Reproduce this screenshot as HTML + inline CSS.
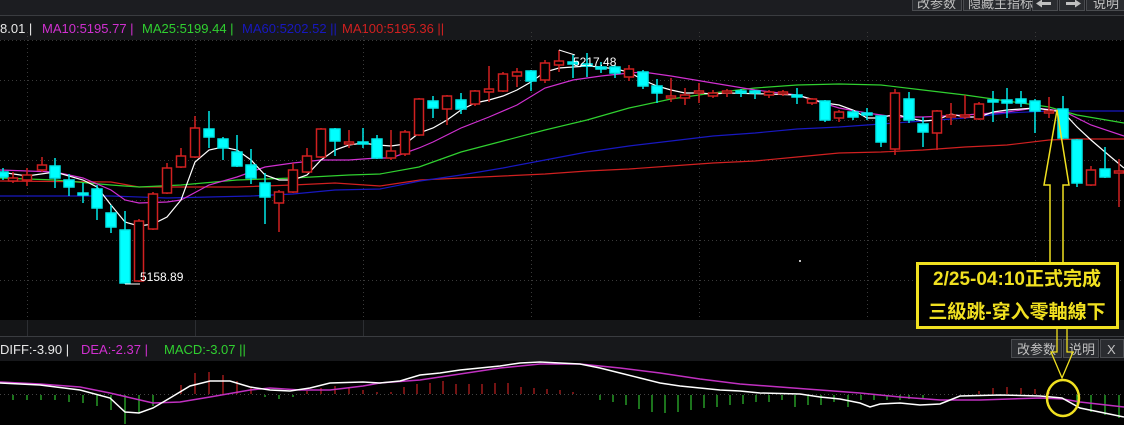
<!DOCTYPE html>
<html><head><meta charset="utf-8"><style>
body{margin:0;width:1124px;height:425px;overflow:hidden;background:#000;font-family:"Liberation Sans","Noto Sans CJK SC",sans-serif}
svg{display:block}
</style></head><body>
<svg width="1124" height="425" viewBox="0 0 1124 425" xmlns="http://www.w3.org/2000/svg" font-family="Liberation Sans, Noto Sans CJK SC, sans-serif">
<rect width="1124" height="425" fill="#000"/>
<rect x="0" y="0" width="1124" height="15" fill="#1c1d21"/>
<line x1="0" y1="15.5" x2="1124" y2="15.5" stroke="#3a3c40"/>
<g fill="#2a2c30" stroke="#4a4c50">
<rect x="912.5" y="-3.5" width="49" height="14"/>
<rect x="963.5" y="-3.5" width="67" height="14"/>
<rect x="1032.5" y="-3.5" width="25" height="14"/>
<rect x="1059.5" y="-3.5" width="25" height="14"/>
<rect x="1086.5" y="-3.5" width="38" height="14"/>
</g>
<g fill="#c0c0c0" font-size="13">
<text x="917" y="8">改参数</text>
<text x="968" y="8">隐藏主指标</text>
<text x="1093" y="8">说明</text>
</g>
<rect x="1040" y="2" width="11" height="3" fill="#c0c0c0"/><path d="M1036 3.5l6-4v8z" fill="#c0c0c0"/>
<rect x="1066" y="2" width="11" height="3" fill="#c0c0c0"/><path d="M1081 3.5l-6-4v8z" fill="#c0c0c0"/>
<rect x="0" y="16" width="1124" height="24" fill="#17181b"/>
<g font-size="13">
<text x="0" y="33" fill="#e8e8e8">8.01 |</text>
<text x="42" y="33" fill="#d030d0">MA10:5195.77 |</text>
<text x="142" y="33" fill="#30d030">MA25:5199.44 |</text>
<text x="242" y="33" fill="#1818c0">MA60:5202.52 ||</text>
<text x="342" y="33" fill="#d02020">MA100:5195.36 ||</text>
</g>
<g stroke="#3a3a3a" stroke-dasharray="1 3">
<line x1="0" y1="40.5" x2="1124" y2="40.5"/>
<line x1="0" y1="80.5" x2="1124" y2="80.5"/>
<line x1="0" y1="120.5" x2="1124" y2="120.5"/>
<line x1="0" y1="160.5" x2="1124" y2="160.5"/>
<line x1="0" y1="200.5" x2="1124" y2="200.5"/>
<line x1="0" y1="240.5" x2="1124" y2="240.5"/>
<line x1="0" y1="280.5" x2="1124" y2="280.5"/>
<line x1="27.5" y1="32" x2="27.5" y2="320"/>
<line x1="195.5" y1="32" x2="195.5" y2="320"/>
<line x1="363.5" y1="32" x2="363.5" y2="320"/>
<line x1="531.5" y1="32" x2="531.5" y2="320"/>
<line x1="699.5" y1="32" x2="699.5" y2="320"/>
<line x1="867.5" y1="32" x2="867.5" y2="320"/>
<line x1="1035.5" y1="32" x2="1035.5" y2="320"/>
</g>
<g fill="none" stroke-width="1.2">
<polyline stroke="#d02020" points="0,181 111,182 139,187 181,187 237,187 293,185 335,183 380,186 420,180 461,178 503,176 545,174 587,171 629,169 671,166 713,163 755,161 797,157 839,153 881,152 923,150 965,147 1007,145 1049,140 1077,139 1124,139"/>
<polyline stroke="#1818c0" points="0,196 111,196 167,198 209,197 251,196 293,194 335,190 380,189 420,181 461,175 503,168 545,160 587,152 629,146 671,141 713,136 755,133 797,129 839,127 881,124 923,121 965,118 1007,113 1049,111 1124,111"/>
<polyline stroke="#30d030" points="0,178 55,180 111,185 139,187 181,185 237,180 293,178 349,175 380,174 419,167 461,152 503,141 545,130 587,120 629,108 671,99 713,93 755,88 797,85 839,84 881,85 923,90 965,95 1007,101 1049,107 1077,115 1124,123"/>
<polyline stroke="#d030d0" points="0,170 55,172 83,178 111,190 125,200 139,203 167,202 181,200 209,185 237,177 251,172 265,167 293,163 321,160 349,160 377,158 391,158 419,148 433,142 461,128 489,117 517,105 545,88 573,80 601,76 629,73 643,72 671,76 713,83 755,90 797,95 839,108 867,113 895,117 923,117 965,115 1007,112 1035,108 1063,111 1091,125 1124,136"/>
<polyline stroke="#fff" points="0,172 27,176 55,172 83,180 97,187 111,205 125,222 139,226 153,224 167,217 181,200 195,162 209,150 223,147 237,150 251,160 265,175 279,180 293,180 307,175 321,160 335,150 349,145 363,143 377,145 391,146 405,144 419,133 433,128 447,120 461,110 475,103 489,100 503,96 517,90 531,82 545,72 559,68 573,67 587,66 601,67 615,69 629,72 643,80 657,86 671,90 685,93 699,93 713,94 727,93 769,94 797,95 825,103 839,105 853,110 867,118 881,118 895,114 909,118 923,121 937,120 951,114 965,117 979,117 993,112 1007,110 1021,109 1035,108 1049,110 1063,112 1077,127 1091,140 1105,152 1124,168"/>
</g>
<g stroke-width="1.5">
<g stroke="#00e8e8" fill="#00ffff">
<line x1="3" y1="168" x2="3" y2="180"/><rect x="-2" y="172" width="10" height="5"/>
<line x1="55" y1="158" x2="55" y2="188"/><rect x="50" y="166" width="10" height="12"/>
<line x1="69" y1="174" x2="69" y2="196"/><rect x="64" y="180" width="10" height="7"/>
<line x1="83" y1="183" x2="83" y2="203"/><rect x="78" y="193" width="10" height="2"/>
<line x1="97" y1="185" x2="97" y2="220"/><rect x="92" y="189" width="10" height="19"/>
<line x1="111" y1="205" x2="111" y2="233"/><rect x="106" y="213" width="10" height="14"/>
<line x1="125" y1="211" x2="125" y2="284"/><rect x="120" y="230" width="10" height="53"/>
<line x1="209" y1="111" x2="209" y2="148"/><rect x="204" y="129" width="10" height="8"/>
<line x1="223" y1="137" x2="223" y2="160"/><rect x="218" y="139" width="10" height="9"/>
<line x1="237" y1="135" x2="237" y2="167"/><rect x="232" y="152" width="10" height="14"/>
<line x1="251" y1="149" x2="251" y2="184"/><rect x="246" y="165" width="10" height="13"/>
<line x1="265" y1="173" x2="265" y2="224"/><rect x="260" y="183" width="10" height="14"/>
<line x1="335" y1="128" x2="335" y2="156"/><rect x="330" y="129" width="10" height="12"/>
<line x1="363" y1="128" x2="363" y2="148"/><rect x="358" y="142" width="10" height="2"/>
<line x1="377" y1="135" x2="377" y2="159"/><rect x="372" y="139" width="10" height="19"/>
<line x1="433" y1="96" x2="433" y2="118"/><rect x="428" y="101" width="10" height="7"/>
<line x1="461" y1="93" x2="461" y2="114"/><rect x="456" y="100" width="10" height="9"/>
<line x1="531" y1="70" x2="531" y2="91"/><rect x="526" y="71" width="10" height="10"/>
<line x1="573" y1="55" x2="573" y2="78"/><rect x="568" y="62" width="10" height="2"/>
<line x1="587" y1="53" x2="587" y2="77"/><rect x="582" y="64" width="10" height="2"/>
<line x1="601" y1="62" x2="601" y2="73"/><rect x="596" y="67" width="10" height="2"/>
<line x1="615" y1="65" x2="615" y2="78"/><rect x="610" y="67" width="10" height="6"/>
<line x1="643" y1="70" x2="643" y2="89"/><rect x="638" y="72" width="10" height="14"/>
<line x1="657" y1="79" x2="657" y2="103"/><rect x="652" y="86" width="10" height="7"/>
<line x1="741" y1="89" x2="741" y2="97"/><rect x="736" y="91" width="10" height="2"/>
<line x1="755" y1="90" x2="755" y2="99"/><rect x="750" y="91" width="10" height="2"/>
<line x1="797" y1="88" x2="797" y2="104"/><rect x="792" y="95" width="10" height="2"/>
<line x1="825" y1="100" x2="825" y2="122"/><rect x="820" y="101" width="10" height="19"/>
<line x1="853" y1="110" x2="853" y2="120"/><rect x="848" y="112" width="10" height="5"/>
<line x1="867" y1="108" x2="867" y2="120"/><rect x="862" y="113" width="10" height="2"/>
<line x1="881" y1="115" x2="881" y2="147"/><rect x="876" y="116" width="10" height="26"/>
<line x1="909" y1="92" x2="909" y2="123"/><rect x="904" y="99" width="10" height="21"/>
<line x1="923" y1="117" x2="923" y2="147"/><rect x="918" y="124" width="10" height="8"/>
<line x1="993" y1="91" x2="993" y2="122"/><rect x="988" y="100" width="10" height="2"/>
<line x1="1007" y1="88" x2="1007" y2="118"/><rect x="1002" y="100" width="10" height="3"/>
<line x1="1021" y1="91" x2="1021" y2="107"/><rect x="1016" y="99" width="10" height="4"/>
<line x1="1035" y1="99" x2="1035" y2="133"/><rect x="1030" y="101" width="10" height="10"/>
<line x1="1063" y1="96" x2="1063" y2="139"/><rect x="1058" y="109" width="10" height="29"/>
<line x1="1077" y1="139" x2="1077" y2="187"/><rect x="1072" y="140" width="10" height="43"/>
<line x1="1105" y1="147" x2="1105" y2="178"/><rect x="1100" y="169" width="10" height="8"/>
</g>
<g stroke="#d02020" fill="#000">
<line x1="13" y1="172" x2="13" y2="183"/><rect x="8.5" y="178" width="9" height="3"/>
<line x1="27" y1="168" x2="27" y2="186"/><rect x="22.5" y="175" width="9" height="5"/>
<line x1="42" y1="157" x2="42" y2="172"/><rect x="37.5" y="165" width="9" height="5"/>
<line x1="139" y1="219" x2="139" y2="282"/><rect x="134.5" y="221" width="9" height="60"/>
<line x1="153" y1="192" x2="153" y2="230"/><rect x="148.5" y="194" width="9" height="35"/>
<line x1="167" y1="163" x2="167" y2="194"/><rect x="162.5" y="168" width="9" height="25"/>
<line x1="181" y1="148" x2="181" y2="168"/><rect x="176.5" y="156" width="9" height="11"/>
<line x1="195" y1="116" x2="195" y2="158"/><rect x="190.5" y="128" width="9" height="29"/>
<line x1="279" y1="190" x2="279" y2="232"/><rect x="274.5" y="192" width="9" height="11"/>
<line x1="293" y1="163" x2="293" y2="193"/><rect x="288.5" y="170" width="9" height="22"/>
<line x1="307" y1="148" x2="307" y2="173"/><rect x="302.5" y="156" width="9" height="16"/>
<line x1="321" y1="128" x2="321" y2="158"/><rect x="316.5" y="129" width="9" height="28"/>
<line x1="349" y1="130" x2="349" y2="148"/><rect x="344.5" y="142" width="9" height="2"/>
<line x1="391" y1="130" x2="391" y2="160"/><rect x="386.5" y="151" width="9" height="7"/>
<line x1="405" y1="130" x2="405" y2="156"/><rect x="400.5" y="132" width="9" height="22"/>
<line x1="419" y1="98" x2="419" y2="136"/><rect x="414.5" y="99" width="9" height="36"/>
<line x1="447" y1="95" x2="447" y2="125"/><rect x="442.5" y="96" width="9" height="13"/>
<line x1="475" y1="90" x2="475" y2="106"/><rect x="470.5" y="91" width="9" height="13"/>
<line x1="489" y1="66" x2="489" y2="102"/><rect x="484.5" y="89" width="9" height="3"/>
<line x1="503" y1="72" x2="503" y2="92"/><rect x="498.5" y="74" width="9" height="17"/>
<line x1="517" y1="68" x2="517" y2="87"/><rect x="512.5" y="72" width="9" height="4"/>
<line x1="545" y1="60" x2="545" y2="83"/><rect x="540.5" y="63" width="9" height="17"/>
<line x1="559" y1="50" x2="559" y2="72"/><rect x="554.5" y="61" width="9" height="4"/>
<line x1="629" y1="65" x2="629" y2="81"/><rect x="624.5" y="69" width="9" height="8"/>
<line x1="671" y1="78" x2="671" y2="102"/><rect x="666.5" y="96" width="9" height="2"/>
<line x1="685" y1="88" x2="685" y2="105"/><rect x="680.5" y="95" width="9" height="3"/>
<line x1="699" y1="83" x2="699" y2="103"/><rect x="694.5" y="91" width="9" height="2"/>
<line x1="713" y1="90" x2="713" y2="98"/><rect x="708.5" y="93" width="9" height="3"/>
<line x1="727" y1="89" x2="727" y2="97"/><rect x="722.5" y="91" width="9" height="2"/>
<line x1="769" y1="90" x2="769" y2="98"/><rect x="764.5" y="92" width="9" height="3"/>
<line x1="783" y1="90" x2="783" y2="96"/><rect x="778.5" y="92" width="9" height="2"/>
<line x1="812" y1="98" x2="812" y2="105"/><rect x="807.5" y="99" width="9" height="4"/>
<line x1="839" y1="110" x2="839" y2="122"/><rect x="834.5" y="112" width="9" height="6"/>
<line x1="895" y1="89" x2="895" y2="155"/><rect x="890.5" y="93" width="9" height="56"/>
<line x1="937" y1="110" x2="937" y2="150"/><rect x="932.5" y="111" width="9" height="22"/>
<line x1="951" y1="103" x2="951" y2="125"/><rect x="946.5" y="115" width="9" height="2"/>
<line x1="965" y1="95" x2="965" y2="119"/><rect x="960.5" y="115" width="9" height="2"/>
<line x1="979" y1="102" x2="979" y2="120"/><rect x="974.5" y="104" width="9" height="15"/>
<line x1="1049" y1="97" x2="1049" y2="118"/><rect x="1044.5" y="111" width="9" height="2"/>
<line x1="1091" y1="166" x2="1091" y2="186"/><rect x="1086.5" y="170" width="9" height="15"/>
<line x1="1119" y1="159" x2="1119" y2="207"/><rect x="1114.5" y="171" width="9" height="2"/>
</g>
</g>
<polyline points="125,284 140,284" stroke="#fff" fill="none"/>
<text x="140" y="281" fill="#fff" font-size="12">5158.89</text>
<polyline points="559,50 575,55" stroke="#fff" fill="none"/>
<text x="573" y="66" fill="#fff" font-size="12">5217.48</text>
<circle cx="800" cy="261" r="1" fill="#fff"/>
<path d="M1057 110 L1044 185 L1050 185 L1050 262 M1057 110 L1069 185 L1063 185 L1063 262" stroke="#f0e020" stroke-width="1.5" fill="none"/>
<rect x="0" y="320" width="1124" height="17" fill="#141517"/>
<line x1="0" y1="336.5" x2="1124" y2="336.5" stroke="#3a3c40"/>
<g stroke="#2c2e32"><line x1="27.5" y1="320" x2="27.5" y2="336"/><line x1="195.5" y1="320" x2="195.5" y2="336"/><line x1="363.5" y1="320" x2="363.5" y2="336"/></g>
<rect x="0" y="337" width="1124" height="24" fill="#17181b"/>
<g font-size="13">
<text x="0" y="354" fill="#e8e8e8">DIFF:-3.90 |</text>
<text x="81" y="354" fill="#d030d0">DEA:-2.37 |</text>
<text x="164" y="354" fill="#30d030">MACD:-3.07 ||</text>
</g>
<g fill="#2a2c30" stroke="#4a4c50">
<rect x="1011.5" y="339.5" width="50" height="18"/>
<rect x="1063.5" y="339.5" width="35" height="18"/>
<rect x="1100.5" y="339.5" width="23" height="18"/>
</g>
<g fill="#c0c0c0" font-size="13"><text x="1017" y="354">改参数</text><text x="1069" y="354">说明</text><text x="1107" y="354">X</text></g>
<line x1="0" y1="394.5" x2="1124" y2="394.5" stroke="#444" stroke-dasharray="1 3"/>
<g stroke="#30c030" stroke-width="1.2">
<line x1="13" y1="395" x2="13" y2="400"/><line x1="27" y1="395" x2="27" y2="400"/><line x1="41" y1="395" x2="41" y2="400"/><line x1="55" y1="395" x2="55" y2="400"/><line x1="69" y1="395" x2="69" y2="402"/><line x1="83" y1="395" x2="83" y2="403"/><line x1="97" y1="395" x2="97" y2="406"/><line x1="111" y1="395" x2="111" y2="410"/><line x1="125" y1="395" x2="125" y2="424"/><line x1="139" y1="395" x2="139" y2="413"/><line x1="153" y1="395" x2="153" y2="406"/>
<line x1="265" y1="395" x2="265" y2="397"/><line x1="279" y1="395" x2="279" y2="399"/><line x1="293" y1="395" x2="293" y2="397"/>
<line x1="600" y1="395" x2="600" y2="400"/><line x1="613" y1="395" x2="613" y2="402"/><line x1="626" y1="395" x2="626" y2="405"/><line x1="639" y1="395" x2="639" y2="409"/><line x1="652" y1="395" x2="652" y2="412"/><line x1="665" y1="395" x2="665" y2="413"/><line x1="678" y1="395" x2="678" y2="412"/><line x1="691" y1="395" x2="691" y2="410"/><line x1="704" y1="395" x2="704" y2="408"/><line x1="717" y1="395" x2="717" y2="407"/><line x1="730" y1="395" x2="730" y2="405"/><line x1="743" y1="395" x2="743" y2="404"/><line x1="756" y1="395" x2="756" y2="402"/><line x1="769" y1="395" x2="769" y2="402"/><line x1="782" y1="395" x2="782" y2="400"/><line x1="795" y1="395" x2="795" y2="407"/><line x1="808" y1="395" x2="808" y2="405"/><line x1="821" y1="395" x2="821" y2="405"/><line x1="834" y1="395" x2="834" y2="402"/><line x1="848" y1="395" x2="848" y2="407"/><line x1="861" y1="395" x2="861" y2="400"/><line x1="874" y1="395" x2="874" y2="400"/><line x1="887" y1="395" x2="887" y2="400"/><line x1="900" y1="395" x2="900" y2="400"/><line x1="909" y1="395" x2="909" y2="399"/><line x1="923" y1="395" x2="923" y2="399"/>
<line x1="1077" y1="395" x2="1077" y2="405"/><line x1="1091" y1="395" x2="1091" y2="412"/><line x1="1105" y1="395" x2="1105" y2="415"/><line x1="1119" y1="395" x2="1119" y2="418"/>
</g>
<g stroke="#c02020" stroke-width="1.2">
<line x1="181" y1="394" x2="181" y2="385"/><line x1="195" y1="394" x2="195" y2="373"/><line x1="209" y1="394" x2="209" y2="372"/><line x1="223" y1="394" x2="223" y2="375"/><line x1="237" y1="394" x2="237" y2="381"/><line x1="251" y1="394" x2="251" y2="388"/>
<line x1="307" y1="394" x2="307" y2="391"/><line x1="321" y1="394" x2="321" y2="388"/><line x1="335" y1="394" x2="335" y2="386"/><line x1="349" y1="394" x2="349" y2="387"/><line x1="363" y1="394" x2="363" y2="390"/><line x1="377" y1="394" x2="377" y2="392"/>
<line x1="391" y1="394" x2="391" y2="392"/><line x1="404" y1="394" x2="404" y2="387"/><line x1="417" y1="394" x2="417" y2="384"/><line x1="430" y1="394" x2="430" y2="383"/><line x1="443" y1="394" x2="443" y2="381"/><line x1="456" y1="394" x2="456" y2="384"/><line x1="469" y1="394" x2="469" y2="384"/><line x1="482" y1="394" x2="482" y2="384"/><line x1="495" y1="394" x2="495" y2="383"/><line x1="508" y1="394" x2="508" y2="383"/><line x1="521" y1="394" x2="521" y2="387"/><line x1="534" y1="394" x2="534" y2="388"/><line x1="547" y1="394" x2="547" y2="389"/><line x1="560" y1="394" x2="560" y2="390"/><line x1="573" y1="394" x2="573" y2="392"/>
<line x1="979" y1="394" x2="979" y2="391"/><line x1="993" y1="394" x2="993" y2="388"/><line x1="1007" y1="394" x2="1007" y2="387"/><line x1="1021" y1="394" x2="1021" y2="388"/><line x1="1035" y1="394" x2="1035" y2="389"/><line x1="1049" y1="394" x2="1049" y2="392"/>
</g>
<g fill="none" stroke-width="1.5">
<polyline stroke="#c030c0" points="0,382 40,384 80,387 110,393 140,400 153,403 180,402 210,397 250,390 270,388 300,390 330,390 363,386 380,383 420,380 460,374 500,368 540,364 580,364 620,368 660,373 700,379 740,384 780,387 820,390 860,393 900,397 940,400 980,400 1040,398 1063,399 1080,402 1124,407"/>
<polyline stroke="#fff" points="0,383 40,385 80,390 110,398 125,412 139,413 153,408 170,398 190,386 210,381 230,381 250,387 270,390 290,391 310,388 330,383 363,382 380,383 400,381 420,375 440,373 460,370 480,368 500,366 520,363 540,362 560,363 580,364 600,368 620,373 640,378 660,383 680,386 700,388 720,390 740,391 760,393 800,394 820,397 840,399 860,403 870,407 880,404 900,403 920,405 940,404 960,396 1000,395 1040,396 1062,398 1080,408 1124,417"/>
</g>
<rect x="917.5" y="263.5" width="200" height="64" fill="#000" stroke="#f0e020" stroke-width="3"/>
<g fill="#f0e020" font-weight="bold" font-size="19" text-anchor="middle">
<text x="1017" y="285">2/25-04:10正式完成</text>
<text x="1017" y="318">三級跳-穿入零軸線下</text>
</g>
<path d="M1057 329 V352 H1051 L1062 378 L1073 352 H1067 V329" stroke="#f0e020" stroke-width="1.3" fill="none"/>
<ellipse cx="1063" cy="398" rx="16" ry="18" fill="none" stroke="#f0e020" stroke-width="2.5"/>
</svg>
</body></html>
